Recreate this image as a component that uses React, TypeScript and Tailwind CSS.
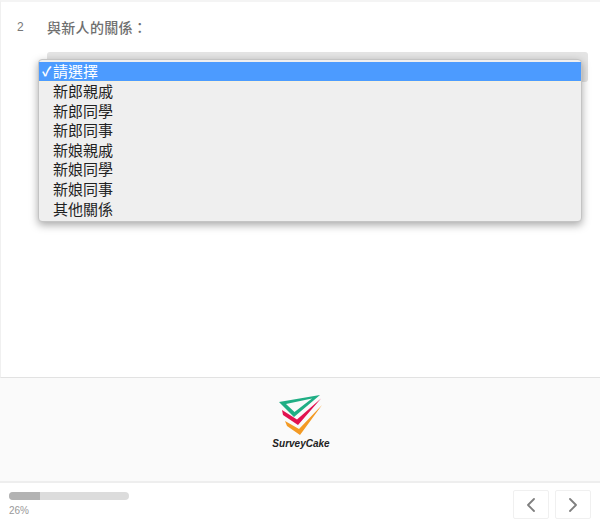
import { ChevronLeft, ChevronRight } from 'lucide-react';

const options = ['新郎親戚', '新郎同學', '新郎同事', '新娘親戚', '新娘同學', '新娘同事', '其他關係'];

const Logo = () => (
  <svg width="44" height="42" viewBox="0 0 44 42" className="translate-x-[1px]">
    <path d="M6 26 L20 34 L43 10 L21 40 L8 31 Z" fill="#f39a24" />
    <path d="M3 15 L18 24.5 L42 3.5 L19 30 L4 20 Z" fill="#e2124f" />
    <path fillRule="evenodd" d="M0 7 L41 0 L15 22 Z M7 9 L33 3.6 L15.5 17 Z" fill="#1fae84" />
  </svg>
);

export default function App() {
  return (
    <div className="w-[600px] h-[527px] flex flex-col bg-white overflow-hidden font-['Liberation_Sans','Noto_Sans_CJK_TC',sans-serif]">
      {/* Question */}
      <section className="relative h-[378px] shrink-0 border-t-2 border-l border-b border-t-[#f4f4f4] border-l-[#f0f0f0] border-b-[#e2e2e2] flex items-start">
        <span className="w-[46px] pl-[16px] pt-[18px] text-xs leading-[15px] text-[#777777]">2</span>
        <div className="flex-1 pt-[15px] pr-[12px]">
          <h2 className="text-sm leading-[22px] font-medium text-[#6f6f6f] tracking-[0.3px]">與新人的關係：</h2>
          <div className="mt-[13px] h-[30px] rounded-[3px] bg-[#e4e4e4]" />
        </div>

        {/* Open select menu */}
        <div className="absolute left-[37px] top-[57px] w-[544px] h-[163px] rounded-[4px] border border-[#c4c4c4] bg-[#efefef] shadow-[0_3px_8px_rgba(0,0,0,0.35)] pt-[2px]">
          <div className="flex h-[19px] items-center bg-[#4c9bff] text-[15px] leading-[19px] text-white border-b border-b-[#f7f1dc] box-content">
            <span className="w-[14px] pl-[3px] text-[13px] font-bold">✓</span>
            <span>請選擇</span>
          </div>
          <ul>
            {options.map((opt) => (
              <li key={opt} className="h-[19.6px] pl-[14px] text-[15px] leading-[19.6px] text-[#222222]">
                {opt}
              </li>
            ))}
          </ul>
        </div>
      </section>

      {/* Brand */}
      <div className="h-[103px] shrink-0 bg-[#fafafa] flex flex-col items-center pt-[17px]">
        <Logo />
        <span className="text-[10px] leading-[14px] font-bold italic text-[#222222] translate-x-[1px]">SurveyCake</span>
      </div>

      {/* Progress + pager */}
      <footer className="flex-1 border-t-2 border-t-[#eeeeee] flex items-start justify-between pl-[9px] pr-[9px]">
        <div className="pt-[9px]">
          <div className="w-[120px] h-[8px] rounded-full bg-[#dcdcdc] overflow-hidden">
            <div className="w-[31px] h-full bg-[#b3b3b3]" />
          </div>
          <p className="mt-[5px] text-[10px] leading-[12px] text-[#999999]">26%</p>
        </div>
        <div className="flex gap-[6px] pt-[7px]">
          <button className="w-[36px] h-[29px] flex items-center justify-center rounded-[2px] border border-[#f0f0f0]">
            <ChevronLeft className="w-[24px] h-[24px] text-[#7f7f7f]" strokeWidth={1.8} />
          </button>
          <button className="w-[36px] h-[29px] flex items-center justify-center rounded-[2px] border border-[#f0f0f0]">
            <ChevronRight className="w-[24px] h-[24px] text-[#7f7f7f]" strokeWidth={1.8} />
          </button>
        </div>
      </footer>
    </div>
  );
}
